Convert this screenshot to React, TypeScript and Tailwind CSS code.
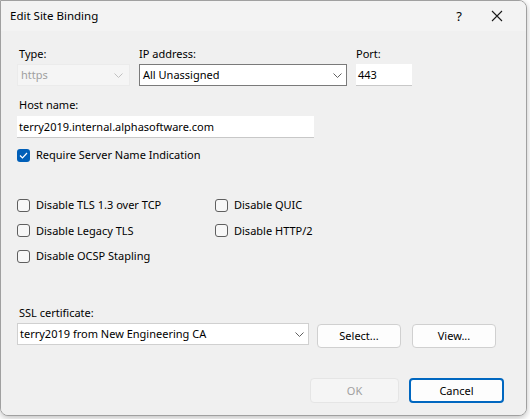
import React from "react";

const F = "font-['Noto_Sans','Liberation_Sans',sans-serif] text-[11px] leading-[16px]";

function Chevron({ color = "#606060" }: { color?: string }) {
  return (
    <svg width="9" height="5" viewBox="0 0 9 5" className="shrink-0">
      <path d="M0.5 0.5 L4.5 4.5 L8.5 0.5" fill="none" stroke={color} strokeWidth="1" />
    </svg>
  );
}

function Check({ label, checked = false }: { label: string; checked?: boolean }) {
  return (
    <div className="flex items-center h-[16px]">
      {checked ? (
        <div className="w-[13px] h-[13px] rounded-[3px] bg-[#005fb8] flex items-center justify-center">
          <svg width="9" height="7" viewBox="0 0 9 7">
            <path d="M1 3.5 L3.5 6 L8 1" fill="none" stroke="#ffffff" strokeWidth="1.2" />
          </svg>
        </div>
      ) : (
        <div className="w-[13px] h-[13px] rounded-[3px] border border-[#5f5f5f] bg-[#f7f7f7]" />
      )}
      <span className="ml-[6px] text-black">{label}</span>
    </div>
  );
}

export default function App() {
  return (
    <div className={`w-[530px] h-[419px] bg-white overflow-hidden relative ${F}`}>
      <div className="w-[527px] h-[416px] border border-[#a0a0a0] rounded-tr-[8px] rounded-b-[8px] overflow-hidden flex flex-col bg-[#f0f0f0] shadow-[0_2px_6px_rgba(0,0,0,0.25)]">
        {/* Title bar */}
        <div className="h-[30px] bg-[#f3f3f3] flex items-center shrink-0">
          <span className="ml-[9px] text-black text-[11.5px]">Edit Site Binding</span>
          <div className="flex-1" />
          <span className="text-black text-[13px] mr-[29px]">?</span>
          <svg width="12" height="12" viewBox="0 0 12 12" className="mr-[23px]">
            <path d="M1 1 L11 11 M11 1 L1 11" stroke="#1a1a1a" strokeWidth="1.1" fill="none" />
          </svg>
        </div>
        {/* Body */}
        <div className="flex-1 bg-[#f0f0f0] pl-[16px] pr-[22px] flex flex-col">
          {/* row 1 */}
          <div className="flex mt-[15px]">
            <div className="w-[113px] flex flex-col">
              <span className="pl-[2px] text-black">Type:</span>
              <div className="mt-[2px] h-[22px] bg-[#f5f5f5] border border-[#ebebeb] flex items-center pl-[3px] pr-[6px]">
                <span className="text-[#a0a0a0] flex-1">https</span>
                <Chevron color="#c0c0c0" />
              </div>
            </div>
            <div className="w-[208px] ml-[9px] flex flex-col">
              <span className="text-black">IP address:</span>
              <div className="mt-[2px] h-[22px] bg-white border border-[#7a7a7a] flex items-center pl-[3px] pr-[4px]">
                <span className="text-black flex-1">All Unassigned</span>
                <Chevron />
              </div>
            </div>
            <div className="w-[56px] ml-[9px] flex flex-col">
              <span className="text-black">Port:</span>
              <div className="mt-[2px] h-[22px] bg-white border-b border-[#c8c8c8] flex items-center pl-[2px]">
                <span className="text-black">443</span>
              </div>
            </div>
          </div>
          {/* host name */}
          <span className="mt-[11px] pl-[2px] text-black">Host name:</span>
          <div className="mt-[3px] w-[297px] h-[22px] bg-white border-b border-[#c8c8c8] flex items-center pl-[2px]">
            <span className="text-black">terry2019.internal.alphasoftware.com</span>
          </div>
          <div className="mt-[9px]">
            <Check label="Require Server Name Indication" checked />
          </div>
          {/* disable options */}
          <div className="mt-[34px] flex">
            <div className="w-[198px] flex flex-col gap-[9.5px]">
              <Check label="Disable TLS 1.3 over TCP" />
              <Check label="Disable Legacy TLS" />
              <Check label="Disable OCSP Stapling" />
            </div>
            <div className="flex flex-col gap-[9.5px]">
              <Check label="Disable QUIC" />
              <Check label="Disable HTTP/2" />
            </div>
          </div>
          {/* SSL certificate */}
          <span className="mt-[41px] pl-[2px] text-black">SSL certificate:</span>
          <div className="mt-[2px] flex items-start">
            <div className="w-[292px] h-[22px] bg-white border border-[#d0d0d0] flex items-center pl-[2px] pr-[4px]">
              <span className="text-black flex-1">terry2019 from New Engineering CA</span>
              <Chevron />
            </div>
            <button className="ml-[8px] mt-[1px] w-[84px] h-[24px] bg-[#fdfdfd] border border-[#d0d0d0] rounded-[4px] text-black">
              Select...
            </button>
            <button className="ml-[11px] mt-[1px] w-[84px] h-[24px] bg-[#fdfdfd] border border-[#d0d0d0] rounded-[4px] text-black">
              View...
            </button>
          </div>
          {/* footer */}
          <div className="mt-[30px] flex justify-end">
            <button className="w-[89px] h-[25px] bg-[#f5f5f5] border border-[#e5e5e5] rounded-[4px] text-[#a0a0a0]">
              OK
            </button>
            <button className="ml-[10px] w-[95px] h-[25px] bg-[#fdfdfd] border-2 border-[#0067c0] rounded-[4px] text-black">
              Cancel
            </button>
          </div>
        </div>
      </div>
    </div>
  );
}
